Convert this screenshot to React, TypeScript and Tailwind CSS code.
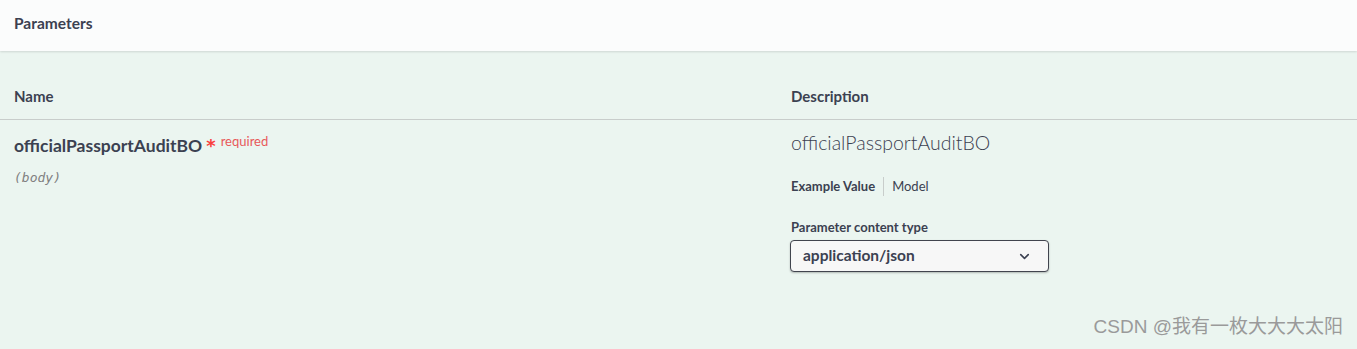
import { ChevronDown } from "lucide-react";

const font = { fontFamily: '"Lato", "Noto Sans CJK SC", sans-serif' };

const ParametersSection = () => {
	return (
		<div className="w-[1357px] h-[349px] bg-[#ebf5f0] text-[#3b4151] overflow-hidden" style={font}>
			<div className="h-[51px] bg-[#fbfcfc] shadow-[0_1px_2px_rgba(0,0,0,0.12)] px-[14px] pt-[13px]">
				<h4 className="text-[15.5px] font-bold leading-[20px]">Parameters</h4>
			</div>

			<div className="flex border-b border-[#c8cdcb] h-[69px] pt-[35px]">
				<div className="w-[791px] pl-[14px] text-[15px] font-bold leading-[20px]">Name</div>
				<div className="flex-1 text-[15px] font-bold leading-[20px]">Description</div>
			</div>

			<div className="flex">
				<div className="w-[791px] pl-[14px] pt-[13px]">
					<div className="flex items-start">
						<span className="text-[17.5px] font-bold leading-[26px]">officialPassportAuditBO</span>
						<span className="text-[#f93e3e] text-[18px] font-bold ml-[4px] leading-[26px]" style={{ fontFamily: '"DejaVu Sans", sans-serif' }}>
							*
						</span>
						<span className="text-[#e8595a] text-[13px] ml-[5px] leading-[16px]">required</span>
					</div>
					<div className="mt-[10px] text-[13px] leading-[18px] italic text-[#808080]" style={{ fontFamily: '"DejaVu Sans Mono", monospace' }}>
						(body)
					</div>
				</div>
				<div className="flex-1 pt-[10px]">
					<div className="text-[19.5px] leading-[26px] font-light">officialPassportAuditBO</div>
					<div className="flex items-center mt-[21px] text-[13px]">
						<span className="font-bold pr-[8px] border-r border-[#c8cdcb] leading-[19px]">Example Value</span>
						<span className="pl-[8px] leading-[19px]">Model</span>
					</div>
					<div className="mt-[23px] text-[13px] leading-[16px] font-bold">Parameter content type</div>
					<div className="mt-[5px] -ml-[1px] w-[259px] h-[32px] rounded-[4px] border border-[#41444e] bg-[#f7f7f7] shadow-[0_1px_2px_rgba(0,0,0,0.25)] flex items-center justify-between pl-[12px] pr-[16px]">
						<span className="text-[15.5px] font-bold">application/json</span>
						<ChevronDown className="w-[15px] h-[15px]" strokeWidth={2.5} />
					</div>
				</div>
			</div>

			<div className="flex justify-end pr-[14px] mt-[43px]">
				<span className="text-[19px] leading-[24px] text-[#9a9a9a]" style={{ fontFamily: '"Liberation Sans", "Noto Sans CJK SC", sans-serif' }}>
					CSDN @我有一枚大大大太阳
				</span>
			</div>
		</div>
	);
};

export default function App() {
	return <ParametersSection />;
}
